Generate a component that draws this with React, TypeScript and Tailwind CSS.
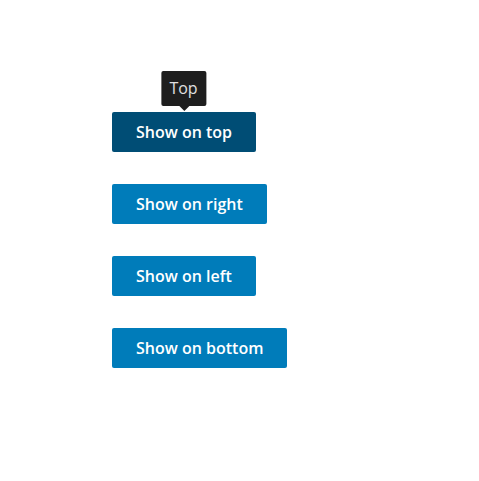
import React from 'react'

const buttons = [
  { label: 'Show on top', active: true },
  { label: 'Show on right' },
  { label: 'Show on left' },
  { label: 'Show on bottom' },
]

export default function App() {
  return (
    <div
      className="min-h-[481px] bg-white pl-[112px] pt-[112px]"
      style={{ fontFamily: '"Open Sans", sans-serif' }}
    >
      <div className="flex flex-col items-start gap-8">
        {buttons.map((b) => (
          <div key={b.label} className="relative">
            {b.active && (
              <div className="absolute bottom-[46px] left-1/2 -translate-x-1/2">
                <div className="relative rounded-[2px] bg-[#1e1e1e] pl-2 pr-[9px] pb-[6px] pt-[6px] text-[16px] leading-[23px] text-[#e0e0e0] whitespace-nowrap">
                  Top
                  <span className="absolute left-1/2 top-full -translate-x-1/2 border-x-[5px] border-t-[5px] border-x-transparent border-t-[#1e1e1e]" />
                </div>
              </div>
            )}
            <button
              type="button"
              className={`h-10 rounded-[2px] px-6 text-[16px] font-semibold text-white ${b.active ? 'bg-[#004d75]' : 'bg-[#007cba]'}`}
            >
              {b.label}
            </button>
          </div>
        ))}
      </div>
    </div>
  )
}
